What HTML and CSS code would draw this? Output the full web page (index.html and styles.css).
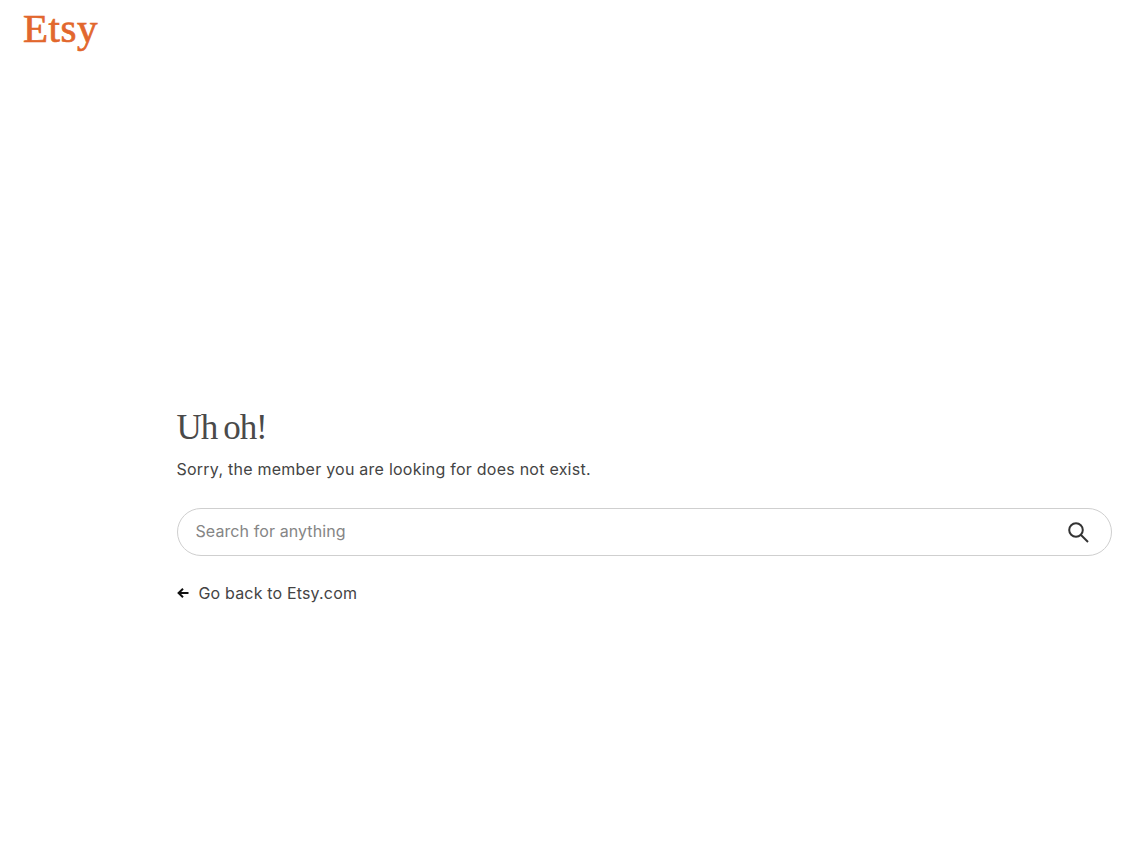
FILE: index.html
```html
<!DOCTYPE html>
<html lang="en">
<head>
<meta charset="utf-8">
<title>Etsy - Uh oh!</title>
<link rel="stylesheet" href="styles.css">
</head>
<body>
<header class="site-header">
  <a class="logo" href="#">Etsy</a>
</header>
<main class="content">
  <h1 class="title">Uh oh!</h1>
  <p class="message">Sorry, the member you are looking for does not exist.</p>
  <form class="search">
    <input class="search-input" type="text" placeholder="Search for anything">
    <button class="search-button" type="button" aria-label="Search">
      <svg class="search-icon" viewBox="0 0 24 24" width="24" height="24" aria-hidden="true">
        <circle cx="10" cy="10" r="6.8" fill="none" stroke="#333" stroke-width="2"/>
        <path d="M15 15 L22 22" fill="none" stroke="#333" stroke-width="2"/>
      </svg>
    </button>
  </form>
  <a class="back" href="#">
    <svg class="back-icon" viewBox="0 0 12 12" width="12" height="12" aria-hidden="true">
      <path d="M11.5 6 H2 M6 1.8 L1.6 6 L6 10.2" fill="none" stroke="#111" stroke-width="2"/>
    </svg>
    <span>Go back to Etsy.com</span>
  </a>
</main>
</body>
</html>
```
FILE: styles.css
```css
* { box-sizing: border-box; }
html, body { margin: 0; background: #fff; }
body {
  height: 856px;
  overflow: hidden;
  font-family: Inter, "Liberation Sans", sans-serif;
  color: #444;
}
.site-header { padding: 4px 0 0 23px; height: 407px; }
.logo {
  font-family: "Liberation Serif", serif;
  font-size: 41px;
  line-height: 48px;
  color: #e2672d;
  -webkit-text-stroke: 0.7px #e2672d;
  text-decoration: none;
  letter-spacing: 0.5px;
}
.content { padding: 0 26px 0 176.5px; }
.title {
  margin: 0;
  font-family: "Liberation Serif", serif;
  font-weight: 400;
  font-size: 35px;
  line-height: 42px;
  color: #4a4a4a;
  letter-spacing: -1.1px;
  word-spacing: -1.5px;
}
.message {
  margin: 9px 0 0;
  font-size: 16px;
  line-height: 22px;
  letter-spacing: 0.24px;
}
.search {
  margin-top: 28px;
  height: 48px;
  display: flex;
  align-items: center;
  border: 1px solid #cfcfcf;
  border-radius: 24px;
  padding: 0 21px 0 18px;
}
.search-input {
  flex: 1;
  border: 0;
  outline: 0;
  padding: 0 0 2px;
  background: transparent;
  font: inherit;
  font-size: 16px;
  letter-spacing: 0.09px;
  color: #444;
}
.search-input::placeholder { color: #858585; opacity: 1; }
.search-button {
  border: 0;
  background: none;
  padding: 0;
  display: flex;
}
.back {
  margin-top: 26px;
  display: flex;
  align-items: center;
  gap: 10px;
  font-size: 16px;
  line-height: 22px;
  letter-spacing: 0.17px;
  color: #444;
  text-decoration: none;
}
```
